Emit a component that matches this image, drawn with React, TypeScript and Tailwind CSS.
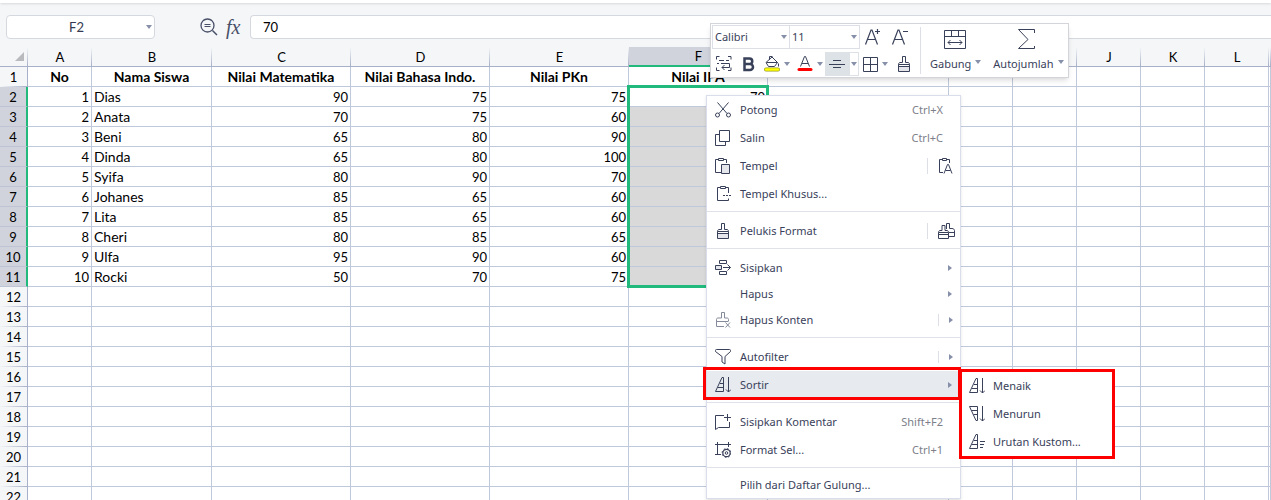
import type { ReactNode } from 'react'
import clsx from 'clsx'

type Student = {
  name: string
  scores: number[]
}

const students: Student[] = [
  { name: 'Dias', scores: [90, 75, 75, 70] },
  { name: 'Anata', scores: [70, 75, 60] },
  { name: 'Beni', scores: [65, 80, 90] },
  { name: 'Dinda', scores: [65, 80, 100] },
  { name: 'Syifa', scores: [80, 90, 70] },
  { name: 'Johanes', scores: [85, 65, 60] },
  { name: 'Lita', scores: [85, 65, 60] },
  { name: 'Cheri', scores: [80, 85, 65] },
  { name: 'Ulfa', scores: [95, 90, 60] },
  { name: 'Rocki', scores: [50, 70, 75] },
]

const titles = ['No', 'Nama Siswa', 'Nilai Matematika', 'Nilai Bahasa Indo.', 'Nilai PKn', 'Nilai IPA']

const columns = [
  { id: 'A', width: 'w-16' },
  { id: 'B', width: 'w-[120px]' },
  { id: 'C', width: 'w-[139px]' },
  { id: 'D', width: 'w-[139px]' },
  { id: 'E', width: 'w-[139px]' },
  { id: 'F', width: 'w-[139px]' },
  { id: 'G', width: 'w-[181px]' },
  { id: 'H', width: 'w-16' },
  { id: 'I', width: 'w-16' },
  { id: 'J', width: 'w-16' },
  { id: 'K', width: 'w-16' },
  { id: 'L', width: 'w-16' },
  { id: '', width: '' },
]

const rowCount = 22

function Icon({ children, size = 16, className }: { children: ReactNode; size?: number; className?: string }) {
  return (
    <svg
      width={size}
      height={size}
      viewBox={`0 0 ${size} ${size}`}
      fill="none"
      stroke="currentColor"
      aria-hidden="true"
      className={clsx('shrink-0', className)}
    >
      {children}
    </svg>
  )
}

function Caret({ className }: { className?: string }) {
  return (
    <svg width="6" height="4" viewBox="0 0 6 4" aria-hidden="true" className={clsx('shrink-0 fill-[#8790a9]', className)}>
      <path d="M0 0h6L3 4z" />
    </svg>
  )
}

const cutIcon = (
  <Icon>
    <path d="M2.500 .5l9.500 11M13.500 .5L4 11.500" />
    <circle cx="2.500" cy="13" r="2" />
    <circle cx="13.500" cy="13" r="2" />
  </Icon>
)

const copyIcon = (
  <Icon>
    <path d="M4.500 .5h10v11h-10zM4.500 4.500h-4v11h10v-4" />
  </Icon>
)

const pasteIcon = (
  <Icon>
    <path d="M6 14.500H.5v-13h3M8.500 1.500h3V5" />
    <path d="M3.500 .5h5v2h-5z" />
    <path d="M6.500 6.500h8v9h-8z" fill="#e4e6eb" />
  </Icon>
)

const pasteSpecialIcon = (
  <Icon>
    <path d="M5 1.500H2.500v13h11v-2M10 1.500h3.500V7M5.500 .5h5v2h-5z" />
    <path d="M8 9.500h2M11 9.500h2M14 9.500h2" />
  </Icon>
)

const pasteTextIcon = (
  <Icon>
    <path d="M4 1.500H1.500v13H5M9 1.500h2.500V5M4.500 .5h4v2h-4z" />
    <path d="M6 15.500l3.500-9h1l3.500 9M7.500 12.500h5" />
  </Icon>
)

const brushIcon = (
  <Icon>
    <path d="M2.500 8.500h11v7h-11z" />
    <path d="M3 11h10v4H3z" fill="#e4e6eb" stroke="none" />
    <path d="M2.500 10.500h11M2.500 8.500c0-1 .5-2 1.500-2h2.500v-6h3v6H12c1 0 1.500 1 1.500 2" />
  </Icon>
)

const doubleBrushIcon = (
  <Icon size={17}>
    <path d="M.5 9.500h10v6H.5zM.5 11.500h10M.5 9.500c0-1 .5-2 1.500-2h2v-5h3v5h2c1 0 1.500 1 1.500 2" />
    <path d="M8.500 6V.5h3v5h2.500c1.500 0 2.500 1 2.500 2v6H11M11 9.500h5.500" />
  </Icon>
)

const insertIcon = (
  <Icon>
    <path d="M4.500 .5h7v3h-7zM4.500 11.500h7v3h-7z" />
    <path d="M.5 5.500h6v4h-6z" fill="#e4e6eb" />
    <path d="M8 7.500h7.500M12.500 4.500l3 3-3 3" />
  </Icon>
)

const clearIcon = (
  <Icon className="text-[#858b9b]">
    <path d="M9 14.500H1.500v-7c0-1 .5-1.500 1.500-1.500h3.500V.5h3V6H12c1 0 1.500.5 1.500 1.500V9M1.500 9.500h12" />
    <path d="M10.500 10.500l4.500 5M15 10.500l-4.500 5" />
  </Icon>
)

const filterIcon = (
  <Icon>
    <path d="M.5 1.500c0-.7.300-1 1-1h13c.7 0 1 .3 1 1v1l-5.500 5v7.500l-3-2V7.500l-6.500-5z" />
  </Icon>
)

const sortIcon = (
  <Icon>
    <path d="M.5 14.500l6.500-14h1.500v14zM3 10.500h5.500M5 6.500h3.500M13.500 0v15M11 12.500l2.500 2.500 2.500-2.500" />
  </Icon>
)

const sortDescIcon = (
  <Icon>
    <path d="M.5 .5h8v14H7zM2.500 4.500h6M4.500 8.500h4M13.500 0v15M11 12.500l2.500 2.500 2.500-2.500" />
  </Icon>
)

const customSortIcon = (
  <Icon>
    <path d="M.5 14.500l6.500-14h1.500v14zM3 10.500h5.500M5 6.500h3.500M11 7.500h5M11 10.500h4M11 13.500h3" />
  </Icon>
)

const commentIcon = (
  <Icon>
    <path d="M9 1.500H.5v14l3-2h11V8M12.500 0v7M9 3.500h7" />
  </Icon>
)

const formatIcon = (
  <Icon>
    <path d="M0 2.500h16M2.500 0v13M13.500 0v5M0 12.500h6" />
    <circle cx="11.500" cy="11" r="3.700" strokeWidth="1.200" />
    <circle cx="11.500" cy="11" r="1.300" />
    <circle cx="11.500" cy="11" r="4.400" strokeDasharray="1.600 1.860" />
  </Icon>
)

type MenuEntry = {
  label: string
  icon?: ReactNode
  shortcut?: string
  submenu?: boolean
  split?: boolean
  extra?: { label: string; icon: ReactNode }
  compact?: boolean
}

const menuGroups: MenuEntry[][] = [
  [
    { label: 'Potong', icon: cutIcon, shortcut: 'Ctrl+X' },
    { label: 'Salin', icon: copyIcon, shortcut: 'Ctrl+C' },
    { label: 'Tempel', icon: pasteIcon, extra: { label: 'Tempel teks', icon: pasteTextIcon } },
    { label: 'Tempel Khusus...', icon: pasteSpecialIcon },
  ],
  [{ label: 'Pelukis Format', icon: brushIcon, extra: { label: 'Pelukis berulang', icon: doubleBrushIcon } }],
  [
    { label: 'Sisipkan', icon: insertIcon, submenu: true },
    { label: 'Hapus', submenu: true, compact: true },
    { label: 'Hapus Konten', icon: clearIcon, submenu: true, split: true },
  ],
  [
    { label: 'Autofilter', icon: filterIcon, submenu: true, split: true },
    { label: 'Sortir', icon: sortIcon, submenu: true },
  ],
  [
    { label: 'Sisipkan Komentar', icon: commentIcon, shortcut: 'Shift+F2' },
    { label: 'Format Sel...', icon: formatIcon, shortcut: 'Ctrl+1' },
  ],
  [{ label: 'Pilih dari Daftar Gulung...', compact: true }],
]

const sortOptions = [
  { label: 'Menaik', icon: sortIcon },
  { label: 'Menurun', icon: sortDescIcon },
  { label: 'Urutan Kustom...', icon: customSortIcon },
]

function FormulaBar() {
  return (
    <div className="mt-3 mb-2 flex h-6 items-center">
      <div className="ml-1.5 flex h-full w-[149px] items-center rounded-sm border border-[#d5d8df] bg-white">
        <input
          aria-label="Kotak nama"
          defaultValue="F2"
          className="h-full min-w-0 flex-1 text-center text-[13px] text-[#333a52] outline-none"
        />
        <button type="button" aria-label="Daftar nama" className="flex h-full w-2 items-center">
          <Caret />
        </button>
      </div>
      <button type="button" aria-label="Cari" className="ml-[45px] text-[#485068]">
        <Icon size={18}>
          <circle cx="7.500" cy="7.500" r="6.500" strokeWidth="1.300" />
          <path d="M12.500 12.500l4.500 4.500" strokeWidth="1.500" />
          <path d="M4.500 6.500h6M4.500 8.500h6" />
        </Icon>
      </button>
      <button
        type="button"
        aria-label="Sisipkan fungsi"
        className="ml-2 w-5 text-left font-['Liberation_Serif',serif] text-xl leading-5 text-[#485068] italic"
      >
        fx
      </button>
      <input
        aria-label="Rumus"
        defaultValue="70"
        className="ml-1 h-full min-w-0 flex-1 rounded-l-sm border border-r-0 border-[#d5d8df] bg-white pl-3 text-[13px] text-black outline-none"
      />
    </div>
  )
}

function cellText(row: number, col: number) {
  if (row === 1) return titles[col]
  const student = students[row - 2]
  if (!student) return undefined
  if (col === 0) return row - 1
  if (col === 1) return student.name
  return student.scores[col - 2]
}

function Sheet() {
  return (
    <table className="w-full table-fixed border-separate border-spacing-0 text-[13px] leading-[18px] text-black">
      <colgroup>
        <col className="w-7" />
        {columns.map((column) => (
          <col key={column.id} className={column.width} />
        ))}
      </colgroup>
      <thead>
        <tr className="h-5 bg-[#f5f6f8]">
          <th className="border-b border-[#a7b0c8] bg-[linear-gradient(to_bottom,transparent,#a7b0c8)] bg-[length:1px_100%] bg-right bg-no-repeat p-0">
            <svg width="9" height="9" viewBox="0 0 9 9" aria-hidden="true" className="mr-1 ml-auto fill-[#b9babd]">
              <path d="M9 0v9H0z" />
            </svg>
          </th>
          {columns.map((column) => (
            <th
              key={column.id}
              scope="col"
              className={clsx(
                'px-0 pt-px pb-0 font-normal',
                column.id === 'F'
                  ? 'border-b-2 border-[#21b97c] bg-[#d0d3db] leading-[17px]'
                  : 'border-b border-[#a7b0c8] bg-[linear-gradient(to_bottom,transparent,#a7b0c8)] bg-[length:1px_100%] bg-right bg-no-repeat',
              )}
            >
              {column.id}
            </th>
          ))}
        </tr>
      </thead>
      <tbody>
        {Array.from({ length: rowCount }, (_, i) => i + 1).map((row) => {
          const selected = row >= 2 && row <= 11
          return (
            <tr key={row} className="h-5">
              <th
                scope="row"
                className={clsx(
                  'px-0 pt-px text-center font-normal',
                  selected
                    ? 'border-r-2 border-b border-r-[#21b97c] border-b-[#bec4d3] bg-[#d0d3db] pb-0'
                    : 'border-r border-[#a7b0c8] bg-[#f5f6f8] bg-[linear-gradient(to_right,transparent,#a7b0c8)] bg-[length:100%_1px] bg-bottom bg-no-repeat pb-px',
                )}
              >
                {row}
              </th>
              {columns.map((column, col) => (
                <td
                  key={column.id}
                  className={clsx(
                    'border-r border-b border-[#c0c8dc] px-0.5 pt-px pb-0 whitespace-nowrap',
                    row === 1 ? 'text-center text-sm leading-[18px] font-bold' : col === 1 ? 'text-left text-sm leading-[18px]' : 'text-right',
                    column.id === 'F' && selected && 'relative',
                    column.id === 'F' && selected && row > 2 && 'bg-[#d9d9d9]',
                  )}
                >
                  {cellText(row, col)}
                  {column.id === 'F' && row === 2 && (
                    <div className="pointer-events-none absolute -top-0.5 -left-0.5 z-10 h-[203px] w-[142px] border-3 border-[#21b97c]" />
                  )}
                </td>
              ))}
            </tr>
          )
        })}
      </tbody>
    </table>
  )
}

function ToolButton({ label, className, children }: { label: string; className?: string; children: ReactNode }) {
  return (
    <button type="button" aria-label={label} className={clsx('flex items-center', className)}>
      {children}
    </button>
  )
}

function MiniToolbar() {
  return (
    <div className="absolute top-[23px] left-[710px] z-20 flex h-[55px] w-[359px] border border-[#d3d5da] bg-white text-[#39415a] shadow-md">
      <div className="flex w-[209px] flex-col pt-px pl-px">
        <div className="flex h-6 items-center">
          <div className="flex h-full border border-[#dcdfe5] text-[11px]">
            <button type="button" className="flex w-[77px] items-center justify-between border-r border-[#dcdfe5] pr-0.5 pl-0.5">
              Calibri
              <Caret />
            </button>
            <button type="button" className="flex w-[69px] items-center justify-between pr-0.5 pl-0.5">
              11
              <Caret />
            </button>
          </div>
          <ToolButton label="Perbesar huruf" className="ml-1">
            <Icon size={18}>
              <path d="M1.500 16.500L7 2h1l5.500 14.500M3.500 11.500h8M11 3.500h5M13.500 1v5" strokeWidth="1.200" />
            </Icon>
          </ToolButton>
          <ToolButton label="Perkecil huruf" className="ml-[9px]">
            <Icon size={18}>
              <path d="M1.500 16.500L7 2h1l5.500 14.500M3.500 11.500h8M12 3.500h5" strokeWidth="1.200" />
            </Icon>
          </ToolButton>
        </div>
        <div className="mt-[3px] flex h-6 items-center pl-1">
          <ToolButton label="Bungkus teks">
            <Icon>
              <path d="M3.500 .5h-3v3M12 .5h3v3M3.500 14.500h-3v-3M12 14.500h3v-3M3 4.500h5M1 7.500h2M5 7.500h8.500v4H6M8.500 9l-2.500 2.500L8.500 14M10 4.500h3" />
            </Icon>
          </ToolButton>
          <ToolButton label="Tebal" className="ml-2">
            <Icon>
              <path d="M4.500 2.500h5a2.700 2.700 0 0 1 0 5.500h-5zM4.500 8h5.500a3 3 0 0 1 0 6H4.500z" strokeWidth="2.500" />
            </Icon>
          </ToolButton>
          <ToolButton label="Warna isian" className="ml-2 gap-1">
            <Icon>
              <path d="M2 6.500L8 1l5.500 5.500-3 4h-6zM5.500 4V.5h3M2.500 6.500h11M14.500 7.500v3" />
              <path d="M2 13.500h12" stroke="#9a9a20" strokeWidth="4" strokeLinecap="round" />
              <path d="M2 13.500h12" stroke="#ffff00" strokeWidth="2.500" strokeLinecap="round" />
            </Icon>
            <Caret />
          </ToolButton>
          <ToolButton label="Warna huruf" className="ml-[7px] gap-1">
            <Icon>
              <path d="M3.500 10.500L7.500 .5h1l4 10M5 7.500h6" />
              <path d="M2 13.500h12" stroke="#ff0000" strokeWidth="3" strokeLinecap="round" />
            </Icon>
            <Caret />
          </ToolButton>
          <ToolButton label="Perataan" className="ml-0.5 h-6 bg-[#dde2e7] pl-1">
            <Icon>
              <path d="M4 4.500h8M0 8.500h16M4 11.500h8" />
            </Icon>
            <span className="ml-1 flex h-full w-2.5 items-center justify-center border border-[#dde2e7] bg-white">
              <Caret />
            </span>
          </ToolButton>
          <ToolButton label="Garis batas" className="ml-[3px] gap-1">
            <Icon>
              <path d="M1.500 1.500h14v14h-14zM8.500 1.500v14M1.500 8.500h14" />
            </Icon>
            <Caret />
          </ToolButton>
          <ToolButton label="Pelukis format" className="ml-2">
            {brushIcon}
          </ToolButton>
        </div>
      </div>
      <div className="my-[3px] w-px bg-[#dcdfe5]" />
      <div className="flex flex-1 items-start gap-3 pt-1 pl-[9px] text-[11px] leading-4">
        <button type="button" className="flex flex-col items-center gap-1.5">
          <Icon size={24} className="-mb-0.5">
            <path d="M.5 2.500h21v18h-21zM.5 8.500h21M7.500 2.500v6M14.500 2.500v6M4 14.500h14M6.500 12L4 14.500 6.500 17M15.500 12l2.500 2.500-2.500 2.500" />
          </Icon>
          <span className="flex items-center gap-1">
            Gabung
            <Caret className="mb-1" />
          </span>
        </button>
        <button type="button" className="flex flex-col items-center gap-1.5">
          <Icon size={24} className="-mb-0.5">
            <path d="M18.500 5V1.500h-16L12 11.500l-9.500 9h16V18" />
          </Icon>
          <span className="flex items-center gap-1">
            Autojumlah
            <Caret className="mb-1" />
          </span>
        </button>
      </div>
    </div>
  )
}

function SortMenu() {
  return (
    <div role="menu" aria-label="Sortir" className="absolute -top-0.5 left-[252px] z-10 w-[156px] border-3 border-[#fd0000] bg-white">
      {sortOptions.map((option) => (
        <button key={option.label} type="button" role="menuitem" className="flex h-7 w-full items-center gap-2 pl-[7px]">
          {option.icon}
          <span>{option.label}</span>
        </button>
      ))}
    </div>
  )
}

function MenuRow({ entry }: { entry: MenuEntry }) {
  const active = entry.label === 'Sortir'
  return (
    <li className={clsx('relative flex items-center', entry.compact ? 'h-6' : 'h-7', active && 'bg-[#e7eaef]')}>
      <button type="button" role="menuitem" className="flex h-full flex-1 items-center pl-2 text-left">
        <span className="w-[25px]">{entry.icon}</span>
        <span className="flex-1">{entry.label}</span>
        {entry.shortcut && <span className="pr-[17px] text-[#7d808a]">{entry.shortcut}</span>}
        {entry.submenu && (
          <span className={clsx('flex h-3 w-[22px] items-center pl-2.5', entry.split && 'border-l border-[#dcdfe5]')}>
            <svg width="4" height="6" viewBox="0 0 4 6" aria-hidden="true" className="fill-[#8790a9]">
              <path d="M0 0l4 3-4 3z" />
            </svg>
          </span>
        )}
      </button>
      {entry.extra && (
        <button
          type="button"
          aria-label={entry.extra.label}
          className="flex h-4 w-[33px] items-center border-l border-[#dcdfe5] pl-2.5"
        >
          {entry.extra.icon}
        </button>
      )}
      {active && (
        <>
          <div className="pointer-events-none absolute -top-1 -right-px -bottom-px -left-1 border-3 border-[#fd0000]" />
          <SortMenu />
        </>
      )}
    </li>
  )
}

function ContextMenu() {
  return (
    <div className="absolute top-[95px] left-[706px] z-20 w-[255px] border border-[#d9deea] bg-white pb-px text-[11px] leading-4 text-[#39415a] shadow-sm">
      {menuGroups.map((group, i) => (
        <ul
          key={i}
          role="menu"
          className={clsx(i > 0 && 'mt-[3px] border-t border-[#dfe2e9] pt-[5px]')}
        >
          {group.map((entry) => (
            <MenuRow key={entry.label} entry={entry} />
          ))}
        </ul>
      ))}
    </div>
  )
}

export default function App() {
  return (
    <div className="relative h-screen overflow-hidden bg-[#f5f6f8] font-['Lato','Noto_Sans',sans-serif]">
      <div className="h-[3px] bg-white shadow-sm" />
      <FormulaBar />
      <div className="bg-white">
        <Sheet />
      </div>
      <div className="font-['Noto_Sans',sans-serif]">
        <MiniToolbar />
        <ContextMenu />
      </div>
    </div>
  )
}
